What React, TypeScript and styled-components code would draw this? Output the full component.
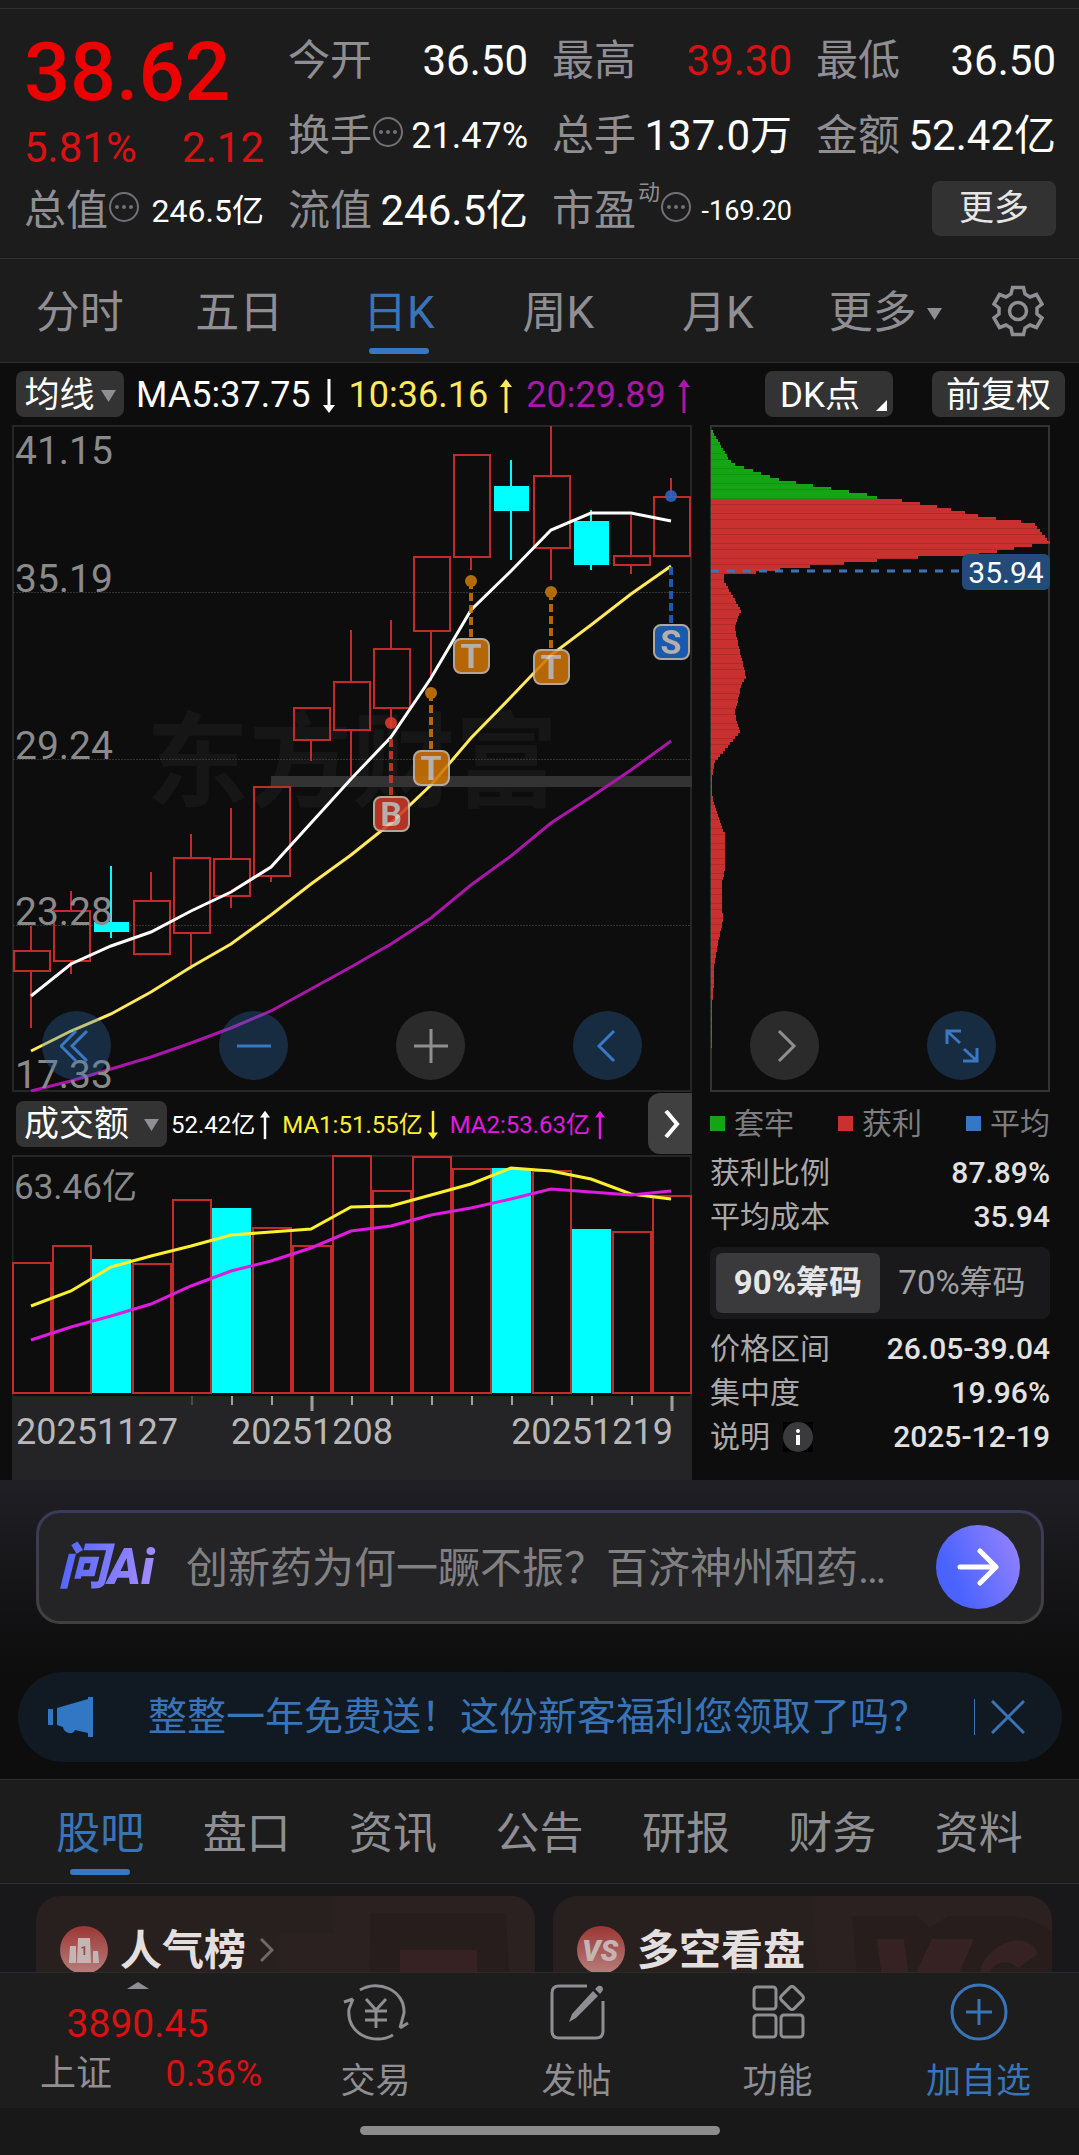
import React from "react";
import styled, { createGlobalStyle, css } from "styled-components";

const c = {
  page: "#0d0d0d",
  bar: "#1c1c1c",
  line: "#2f2f30",
  grey: "#8e8e93",
  axis: "#8a8a8a",
  red: "#d81212",
  price: "#ee0000",
  candle: "#c32a2a",
  cyan: "#00ffff",
  blue: "#3a74b8",
  yellow: "#ffe95e",
  magenta: "#a817a8",
};

const GlobalStyle = createGlobalStyle`
  *, *::before, *::after { box-sizing: border-box; }
  body { margin: 0; background: ${c.page}; line-height: 1.2; }
  body, button { font-family: Roboto, "Noto Sans CJK SC", sans-serif; }
  button { border: 0; padding: 0; margin: 0; background: none; color: inherit; font-size: inherit; line-height: 1.2; cursor: pointer; }
  a { color: inherit; text-decoration: none; }
  svg { display: block; flex: none; }
  svg text { font-family: Roboto, "Noto Sans CJK SC", sans-serif; }
`;

/* ---------- shell ---------- */

const Screen = styled.div`
  display: flex;
  flex-direction: column;
  min-height: 100vh;
  color: #fff;
  background: ${c.page};
`;

const TopStrip = styled.div`
  height: 9px;
  background: ${c.bar};
  border-bottom: 1px solid ${c.line};
`;

/* ---------- quote header ---------- */

const Quote = styled.header`
  display: grid;
  grid-template-columns: repeat(4, minmax(0, 1fr));
  grid-auto-rows: 75px;
  column-gap: 24px;
  padding: 14px 23px 10px 24px;
  background: ${c.bar};
`;

const PriceBlock = styled.div`
  grid-row: 1 / span 2;
`;

const Price = styled.div`
  font-size: 81px;
  line-height: 100px;
  font-weight: 500;
  color: ${c.price};
`;

const Change = styled.div`
  display: flex;
  justify-content: space-between;
  font-size: 42px;
  line-height: 50px;
  color: ${c.red};
`;

const Stat = styled.div`
  display: flex;
  align-items: center;
  justify-content: space-between;
  white-space: nowrap;
`;

const StatName = styled.span`
  display: flex;
  align-items: center;
  font-size: 42px;
  line-height: 60px;
  color: ${c.grey};

  sup {
    align-self: flex-start;
    font-size: 22px;
    line-height: 24px;
    padding-left: 2px;
  }
  svg { margin-bottom: 8px; }
`;

const StatValue = styled.span<{ $size?: number; $up?: boolean }>`
  font-size: ${(p) => p.$size ?? 42}px;
  line-height: 60px;
  color: ${(p) => (p.$up ? c.red : "#fff")};
`;

const MoreButton = styled.button`
  justify-self: end;
  align-self: center;
  width: 124px;
  height: 55px;
  margin-bottom: 4px;
  border-radius: 8px;
  background: #323232;
  color: #e6e6e6;
  font-size: 35px;
`;

const Dots = () => (
  <svg width="32" height="32" viewBox="0 0 32 32" aria-hidden="true">
    <circle cx="16" cy="16" r="14" fill="none" stroke="#727276" strokeWidth="2" />
    <circle cx="9" cy="16" r="2" fill="#727276" />
    <circle cx="16" cy="16" r="2" fill="#727276" />
    <circle cx="23" cy="16" r="2" fill="#727276" />
  </svg>
);

/* ---------- tabs ---------- */

const Tabs = styled.nav<{ $inset?: number }>`
  display: flex;
  height: 105px;
  padding: 0 ${(p) => p.$inset ?? 0}px;
  background: ${c.bar};
  border-top: 1px solid ${c.line};
  border-bottom: 1px solid ${c.line};
`;

const Tab = styled.button<{ $active?: boolean; $menu?: boolean }>`
  position: relative;
  flex: 1 1 140px;
  display: flex;
  align-items: center;
  justify-content: center;
  gap: 10px;
  padding: 6px 0 0 ${(p) => (p.$menu ? 16 : 0)}px;
  font-size: 44px;
  color: ${(p) => (p.$active ? c.blue : c.grey)};
  ${(p) =>
    p.$active &&
    css`
      &::after {
        content: "";
        position: absolute;
        left: calc(50% - 30px);
        bottom: 8px;
        width: 60px;
        height: 6px;
        border-radius: 3px;
        background: #3877c2;
      }
    `}
`;

const GearTab = styled.button`
  display: flex;
  align-items: center;
  justify-content: center;
  width: 122px;
`;

const Triangle = ({ w = 15, h = 12, up = false }) => (
  <svg width={w} height={h} viewBox="0 0 15 12" preserveAspectRatio="none" aria-hidden="true">
    <path d={up ? "M0 12h15L7.500 0z" : "M0 0h15L7.500 12z"} fill={c.grey} />
  </svg>
);

const Gear = () => (
  <svg width="52" height="52" viewBox="0 0 52 52" fill="none" stroke={c.grey} strokeWidth="3.500" aria-hidden="true">
    <path d="M20.500 2.500h11l1.500 6.500 5 3 6.500-2.500 5.500 9.500-5 4v6l5 4-5.500 9.500-6.500-2.500-5 3-1.500 6.500h-11L19 43l-5-3-6.500 2.500L2 33l5-4v-6l-5-4 5.500-9.500L14 12l5-3z" />
    <circle cx="26" cy="26" r="8.500" />
  </svg>
);

/* ---------- chart toolbars ---------- */

const Toolbar = styled.div`
  display: flex;
  align-items: center;
  height: 62px;
  padding: 0 14px 0 16px;
  font-size: 35px;
  white-space: nowrap;
`;

const Chip = styled.button<{ $w: number }>`
  position: relative;
  display: flex;
  align-items: center;
  justify-content: center;
  gap: 6px;
  flex: none;
  width: ${(p) => p.$w}px;
  height: 46px;
  padding-top: 3px;
  border-radius: 8px;
  background: #333334;
  color: #fff;
`;

const Corner = styled.span`
  position: absolute;
  right: 6px;
  bottom: 6px;
  border-left: 11px solid transparent;
  border-bottom: 11px solid #fff;
`;

const DkChip = styled(Chip)`
  justify-content: flex-start;
  padding-left: 15px;
  margin: 0 39px 0 auto;
`;

const Averages = styled.div<{ $small?: boolean }>`
  display: flex;
  align-items: center;
  gap: ${(p) => (p.$small ? 12 : 14)}px;
  margin-left: ${(p) => (p.$small ? 4 : 12)}px;
  padding-top: 3px;
  font-size: ${(p) => (p.$small ? 24 : 36)}px;
`;

const Average = styled.span<{ $color: string; $gap: number }>`
  display: flex;
  align-items: center;
  gap: ${(p) => p.$gap}px;
  color: ${(p) => p.$color};
`;

const Arrow = ({ down = false, w = 12 }) => (
  <svg width={w} height="34" viewBox="0 0 12 34" aria-hidden="true">
    {down ? (
      <>
        <path d="M6 0V28" stroke="currentColor" strokeWidth="3" />
        <path d="M0 26h12L6 34z" fill="currentColor" />
      </>
    ) : (
      <>
        <path d="M6 6V34" stroke="currentColor" strokeWidth="3" />
        <path d="M0 8h12L6 0z" fill="currentColor" />
      </>
    )}
  </svg>
);

/* ---------- chart areas ---------- */

const Columns = styled.div`
  position: relative;
  display: grid;
  grid-template-columns: minmax(0, 2fr) minmax(0, 1fr);
  column-gap: 18px;
  padding: 0 29px 0 12px;
`;

const Plot = styled.svg`
  width: 100%;
  height: auto;
`;

const Controls = styled.div`
  position: absolute;
  left: 42px;
  right: 83px;
  bottom: 12px;
  display: flex;
  justify-content: space-between;
`;

const RoundButton = styled.button<{ $off?: boolean }>`
  display: flex;
  align-items: center;
  justify-content: center;
  width: 69px;
  height: 69px;
  border-radius: 50%;
  color: ${(p) => (p.$off ? "#8f8f93" : "#3a78c4")};
  background: ${(p) => (p.$off ? "rgba(255,255,255,0.125)" : "rgba(48,113,184,0.31)")};
`;

type Candle = [high: number, top: number, bottom: number, low: number, down?: 1];

const candles: Candle[] = [
  [926, 951, 971, 1028],
  [891, 911, 961, 974],
  [866, 922, 932, 938, 1],
  [872, 901, 954, 954],
  [834, 858, 933, 969],
  [808, 859, 896, 908],
  [787, 787, 876, 882],
  [708, 708, 740, 761],
  [630, 682, 730, 776],
  [620, 649, 708, 727],
  [557, 557, 631, 681],
  [455, 455, 557, 570],
  [460, 486, 511, 560, 1],
  [426, 476, 548, 580],
  [510, 521, 565, 570, 1],
  [515, 556, 565, 574],
  [478, 497, 556, 556],
];
const ma5 = [996, 964, 946, 932, 911, 892, 867, 823, 779, 737, 678, 610, 571, 530, 513, 513, 521];
const ma10 = [1051, 1031, 1014, 992, 967, 944, 915, 884, 855, 823, 785, 738, 697, 655, 625, 594, 566];
const ma20 = [1091, 1081, 1069, 1057, 1043, 1028, 1011, 989, 967, 944, 918, 885, 856, 823, 797, 770, 741];

const xOf = (i: number) => 31 + i * 40;
const line = (ys: number[]) => ys.map((y, i) => `${xOf(i)},${y}`).join(" ");

const marks = [
  { x: 471, dot: 581, from: 581, box: 638, t: "T", fill: "#cf7406", dotFill: "#cc7a0c" },
  { x: 431, dot: 693, from: 693, box: 750, t: "T", fill: "#cf7406", dotFill: "#cc7a0c" },
  { x: 551, dot: 592, from: 592, box: 649, t: "T", fill: "#cf7406", dotFill: "#cc7a0c" },
  { x: 671, dot: 496, from: 567, box: 624, t: "S", fill: "#1c66c6", dotFill: "#2f66c6" },
  { x: 391, dot: 723, from: 739, box: 796, t: "B", fill: "#cc3a28", dotFill: "#e23a2a" },
];

const KLine = () => (
  <Plot viewBox="12 425 680 667" role="img" aria-label="日K">
    <text x="146" y="799" fontSize="103" fontWeight="700" fill="#161616">东方财富</text>
    <path d="M13 1091V426H691V1091Z" fill="none" stroke="#262627" strokeWidth="2" />
    {[592, 759, 925].map((y) => (
      <path key={y} d={`M13 ${y + 0.5}H691`} stroke="#343434" strokeWidth="1" strokeDasharray="2 1" />
    ))}
    <rect x="271" y="776" width="421" height="11" fill="#333" />
    {candles.map(([hi, top, bot, lo, down], i) => {
      const x = xOf(i);
      const color = down ? c.cyan : c.candle;
      return (
        <g key={i} stroke={color} strokeWidth="2">
          {hi < top && <path d={`M${x} ${hi}V${top}`} />}
          {lo > bot && <path d={`M${x} ${bot}V${lo}`} />}
          {down ? (
            <rect x={x - 17} y={top} width="35" height={bot - top} fill={c.cyan} stroke="none" />
          ) : (
            <rect x={x - 17} y={top} width="36" height={bot - top} fill="none" />
          )}
        </g>
      );
    })}
    <polyline points={line(ma20)} fill="none" stroke={c.magenta} strokeWidth="3" />
    <polyline points={line(ma10)} fill="none" stroke={c.yellow} strokeWidth="3" />
    <polyline points={line(ma5)} fill="none" stroke="#fff" strokeWidth="3" />
    {marks.map((m) => (
      <g key={m.x} opacity="0.87">
        <circle cx={m.x} cy={m.dot} r="6" fill={m.dotFill} />
        <path d={`M${m.x} ${m.from}V${m.box}`} stroke={m.fill} strokeWidth="4" strokeDasharray="8 4" />
        <rect x={m.x - 17} y={m.box + 1} width="35" height="34" rx="7" fill={m.fill} stroke="#cdbcae" strokeWidth="2" />
        <text x={m.x} y={m.box + 30} textAnchor="middle" fontSize="34" fontWeight="700" fill="#cfc6c2">{m.t}</text>
      </g>
    ))}
    <g fontSize="39" fill={c.axis}>
      <text x="15" y="464">41.15</text>
      <text x="15" y="592">35.19</text>
      <text x="15" y="759">29.24</text>
      <text x="15" y="925">23.28</text>
      <text x="15" y="1088">17.33</text>
    </g>
  </Plot>
);

/* Chip distribution: [price axis y, bar end x] */
const profile: [number, number][] = [
  [427, 711], [458, 729], [463, 735], [478, 779], [484, 813], [493, 867], [498, 884], [499, 902],
  [505, 937], [515, 983], [519, 1008], [521, 1033], [541, 1050], [544, 1032], [553, 979], [555, 933],
  [558, 888], [566, 799], [569, 770], [573, 742], [574, 724], [580, 724], [609, 741], [624, 735],
  [633, 736], [676, 746], [683, 741], [705, 737], [710, 734], [730, 740], [760, 715], [776, 712],
  [794, 712], [812, 717], [833, 725], [868, 725], [881, 722], [905, 722], [919, 723], [941, 718],
  [966, 714], [981, 714], [1004, 712], [1090, 711],
];

const endAt = (y: number) => {
  for (let i = 1; i < profile.length; i++) {
    const [y1, x1] = profile[i];
    const [y0, x0] = profile[i - 1];
    if (y <= y1) return x0 + ((x1 - x0) * (y - y0)) / (y1 - y0);
  }
  return 711;
};

const levels = Array.from({ length: 221 }, (_, i) => 427 + i * 3);

const ChipPlot = () => (
  <Plot viewBox="710 425 340 667" role="img" aria-label="筹码">
    <path d="M711 1091V426H1049V1091Z" fill="none" stroke="#333334" strokeWidth="2" />
    {levels.map((y, i) => {
      const end = Math.round(endAt(y));
      const green = y < 498;
      return (
        <g key={y}>
          <rect x="711" y={y} width={Math.max(end - 711, 0)} height="3" fill={green ? "#14a514" : "#c93030"} />
          {(i * 7) % 5 < 2 && (
            <rect x="711" y={y + 2} width={Math.max(end - 711, 0)} height="1" fill={green ? "#129412" : "#b02a2a"} />
          )}
        </g>
      );
    })}
    <path d="M711 571H960" stroke="#3a74b8" strokeWidth="3" strokeDasharray="8 8" />
    <rect x="962" y="554" width="88" height="36" rx="6" fill="#234b79" />
    <text x="1006" y="583" textAnchor="middle" fontSize="30" fill="#fff">35.94</text>
  </Plot>
);

/* ---------- turnover ---------- */

const VolumeBar = styled.div`
  display: flex;
  align-items: center;
  height: 63px;
  padding-left: 4px;
  font-size: 35px;
  white-space: nowrap;
`;

const NameChip = styled(Chip)`
  gap: 15px;
`;

const NextButton = styled.button`
  display: flex;
  align-items: center;
  justify-content: center;
  align-self: stretch;
  flex: none;
  width: 44px;
  margin: 1px 0 1px auto;
  padding-left: 4px;
  border-radius: 12px 0 0 12px;
  background: #404041;
`;

const volumes: [number, 1?][] = [
  [1263], [1246], [1259, 1], [1264], [1200], [1208, 1], [1228], [1246], [1156],
  [1191], [1157], [1169], [1168, 1], [1171], [1229, 1], [1232], [1196],
];
const vol5 = [1306, 1291, 1267, 1256, 1246, 1235, 1232, 1229, 1207, 1206, 1195, 1184, 1168, 1171, 1179, 1194, 1199];
const vol10 = [1340, 1327, 1316, 1304, 1286, 1271, 1261, 1248, 1231, 1226, 1215, 1208, 1199, 1189, 1192, 1195, 1191];

const VolumePlot = () => (
  <Plot viewBox="12 1155 680 325" role="img" aria-label="成交额">
    <path d="M12 1156H692M691 1155V1396M12.500 1155V1396" stroke="#262627" strokeWidth="2" />
    {volumes.map(([top, down], i) =>
      down ? (
        <rect key={i} x={12 + i * 40} y={top} width="39" height={1393 - top} fill={c.cyan} />
      ) : (
        <rect key={i} x={13 + i * 40} y={top} width="38" height={1393 - top} fill="none" stroke={c.candle} strokeWidth="2" />
      )
    )}
    <polyline points={line(vol5)} fill="none" stroke="#fff02e" strokeWidth="3" />
    <polyline points={line(vol10)} fill="none" stroke="#e01be0" strokeWidth="3" />
    <text x="14" y="1199" fontSize="35" fill={c.axis}>63.46亿</text>
    <rect x="12" y="1396" width="680" height="84" fill="#242426" />
    {Array.from({ length: 13 }, (_, i) => {
      const big = i === 3 || i === 12;
      return (
        <path key={i} d={`M${192 + i * 40} 1396V${big ? 1411 : 1405}`} stroke={i === 0 ? "#4a4a4c" : "#a0a0a2"} strokeWidth={big ? 3 : 2} />
      );
    })}
    <g fontSize="36" fill="#b8b8ba">
      <text x="16" y="1444">20251127</text>
      <text x="312" y="1444" textAnchor="middle">20251208</text>
      <text x="673" y="1444" textAnchor="end">20251219</text>
    </g>
  </Plot>
);

/* ---------- chip statistics ---------- */

const ChipStats = styled.section`
  font-size: 30px;
  color: #a9a9ab;
`;

const Legend = styled.div`
  display: flex;
  align-items: center;
  justify-content: space-between;
  height: 59px;
  padding-top: 4px;
  color: #7d7d80;
`;

const LegendItem = styled.span<{ $color: string }>`
  display: flex;
  align-items: center;
  gap: 9px;
  &::before {
    content: "";
    width: 15px;
    height: 15px;
    background: ${(p) => p.$color};
  }
`;

const Row = styled.div`
  display: flex;
  align-items: center;
  justify-content: space-between;
  height: 44px;
  white-space: nowrap;
  b { font-weight: 500; color: #e2e2e2; }
`;

const RowName = styled.span`
  display: flex;
  align-items: center;
  gap: 13px;
`;

const Segments = styled.div`
  display: flex;
  height: 72px;
  margin: 8px 0;
  padding: 6px;
  border-radius: 8px;
  background: #19191b;
`;

const Segment = styled.button<{ $on?: boolean }>`
  flex: 1 1 0;
  border-radius: 6px;
  font-size: 33px;
  white-space: nowrap;
  font-weight: ${(p) => (p.$on ? 700 : 400)};
  color: ${(p) => (p.$on ? "#e6e6e6" : "#a0a0a2")};
  background: ${(p) => (p.$on ? "#3a3a3c" : "transparent")};
`;

const InfoButton = styled.button`
  display: flex;
  background: #000;
`;

/* ---------- promos ---------- */

const Promos = styled.section`
  display: flex;
  flex-direction: column;
  gap: 48px;
  padding: 30px 17px 17px 18px;
  background: linear-gradient(#1f1f25, #111112 50%, #0d0d0d 65%);
`;

const AskBox = styled.div`
  display: flex;
  align-items: center;
  height: 114px;
  margin: 0 18px;
  padding: 0 21px 0 19px;
  border: 3px solid transparent;
  border-radius: 24px;
  background:
    linear-gradient(#242426, #242426) padding-box,
    linear-gradient(#3a3a5c, #443f3e) border-box;
`;

const AskLogo = styled.span`
  flex: none;
  width: 128px;
  font-size: 50px;
  line-height: 60px;
  font-style: italic;
  font-weight: 900;
  color: transparent;
  background: linear-gradient(100deg, #4c63ff, #a58cff 75%);
  background-clip: text;
  -webkit-background-clip: text;
`;

const AskText = styled.a`
  flex: 1;
  min-width: 0;
  max-width: 704px;
  overflow: hidden;
  padding-top: 4px;
  font-size: 42px;
  line-height: 60px;
  white-space: nowrap;
  color: #808082;
`;

const AskGo = styled.button`
  display: flex;
  align-items: center;
  justify-content: center;
  flex: none;
  width: 84px;
  height: 84px;
  margin-left: auto;
  border-radius: 50%;
  background: linear-gradient(65deg, #4a63ff 25%, #9a85ff);
`;

const Banner = styled.div`
  display: flex;
  align-items: center;
  height: 90px;
  padding: 0 37px 0 30px;
  border-radius: 45px;
  background: #111a22;
  color: ${c.blue};
`;

const BannerText = styled.a`
  flex: 1;
  min-width: 0;
  margin-left: 54px;
  overflow: hidden;
  font-size: 39px;
  line-height: 60px;
  white-space: nowrap;
`;

const BannerClose = styled.button`
  display: flex;
  align-items: center;
  height: 36px;
  padding-left: 16px;
  border-left: 1px solid ${c.blue};
`;

/* ---------- feed ---------- */

const Feed = styled.section`
  flex: 1 0 88px;
  height: 88px;
  overflow: hidden;
  display: grid;
  grid-template-columns: minmax(0, 1fr) minmax(0, 1fr);
  gap: 18px;
  padding: 12px 27px 0 36px;
  background: #18181a;
`;

const Card = styled.article`
  position: relative;
  height: 160px;
  border-radius: 24px;
  overflow: hidden;
  background: #281f1f;
`;

const CardArt = styled.svg`
  position: absolute;
  top: 0;
  right: 0;
`;

const CardHead = styled.a`
  position: relative;
  display: flex;
  align-items: center;
  gap: 12px;
  height: 48px;
  margin: 30px 24px;
  font-size: 42px;
  font-weight: 700;
  color: #e4dfdf;
  span { padding-top: 2px; }
  span + svg { margin-left: 2px; }
`;

/* ---------- bottom bar ---------- */

const BottomBar = styled.nav`
  display: flex;
  height: 136px;
  background: #1d1d1d;
  border-top: 1px solid #2a2a2b;
`;

const IndexCell = styled.a`
  flex: none;
  display: flex;
  flex-direction: column;
  align-items: center;
  width: 275px;
  padding-top: 9px;
  color: ${c.red};
`;

const IndexValue = styled.span`
  font-size: 39px;
  line-height: 50px;
  margin-top: 10px;
`;

const IndexRow = styled.span`
  display: flex;
  justify-content: space-between;
  align-self: stretch;
  padding: 0 13px 0 40px;
  font-size: 36px;
  line-height: 50px;
`;

const Muted = styled.span`
  color: ${c.grey};
`;

const NavItem = styled.a<{ $accent?: boolean }>`
  flex: 1 1 0;
  display: flex;
  flex-direction: column;
  align-items: center;
  gap: 15px;
  padding-top: 9px;
  font-size: 35px;
  line-height: 50px;
  color: ${(p) => (p.$accent ? c.blue : c.grey)};
`;

const HomeArea = styled.div`
  display: flex;
  justify-content: center;
  height: 47px;
  padding-top: 18px;
  background: #181818;
`;

const HomeBar = styled.div`
  width: 360px;
  height: 9px;
  border-radius: 5px;
  background: #8c8c8c;
`;

const stroke = { fill: "none", stroke: "currentColor", strokeWidth: 3 } as const;

export default function App() {
  return (
    <Screen>
      <GlobalStyle />
      <TopStrip />
      <Quote>
        <PriceBlock>
          <Price>38.62</Price>
          <Change><span>5.81%</span><span>2.12</span></Change>
        </PriceBlock>
        <Stat><StatName>今开</StatName><StatValue>36.50</StatValue></Stat>
        <Stat><StatName>最高</StatName><StatValue $up>39.30</StatValue></Stat>
        <Stat><StatName>最低</StatName><StatValue>36.50</StatValue></Stat>
        <Stat><StatName>换手<Dots /></StatName><StatValue $size={36}>21.47%</StatValue></Stat>
        <Stat><StatName>总手</StatName><StatValue>137.0万</StatValue></Stat>
        <Stat><StatName>金额</StatName><StatValue>52.42亿</StatValue></Stat>
        <Stat><StatName>总值<Dots /></StatName><StatValue $size={32}>246.5亿</StatValue></Stat>
        <Stat><StatName>流值</StatName><StatValue>246.5亿</StatValue></Stat>
        <Stat><StatName>市盈<sup>动</sup><Dots /></StatName><StatValue $size={27}>-169.20</StatValue></Stat>
        <MoreButton>更多</MoreButton>
      </Quote>

      <Tabs>
        <Tab>分时</Tab>
        <Tab>五日</Tab>
        <Tab $active>日K</Tab>
        <Tab>周K</Tab>
        <Tab>月K</Tab>
        <Tab $menu>更多<Triangle /></Tab>
        <GearTab aria-label="设置"><Gear /></GearTab>
      </Tabs>

      <Toolbar>
        <Chip $w={108}>均线<Triangle /></Chip>
        <Averages>
          <Average $color="#fff" $gap={12}>MA5:37.75<Arrow down /></Average>
          <Average $color={c.yellow} $gap={12}>10:36.16<Arrow /></Average>
          <Average $color={c.magenta} $gap={12}>20:29.89<Arrow /></Average>
        </Averages>
        <DkChip $w={128}>DK点<Corner /></DkChip>
        <Chip $w={133}>前复权</Chip>
      </Toolbar>

      <Columns>
        <KLine />
        <ChipPlot />
        <Controls>
          <RoundButton aria-label="最早">
            <svg width="34" height="34" viewBox="0 0 34 34" {...stroke}><path d="M16 2 1 17 16 32M27 2 12 17 27 32" /></svg>
          </RoundButton>
          <RoundButton aria-label="缩小">
            <svg width="34" height="34" viewBox="0 0 34 34" {...stroke}><path d="M0 17H34" /></svg>
          </RoundButton>
          <RoundButton $off aria-label="放大">
            <svg width="34" height="34" viewBox="0 0 34 34" {...stroke}><path d="M0 17H34M17 0V34" /></svg>
          </RoundButton>
          <RoundButton aria-label="左移">
            <svg width="34" height="34" viewBox="0 0 34 34" {...stroke}><path d="M23 2 8 17 23 32" /></svg>
          </RoundButton>
          <RoundButton $off aria-label="右移">
            <svg width="34" height="34" viewBox="0 0 34 34" {...stroke}><path d="M11 2 26 17 11 32" /></svg>
          </RoundButton>
          <RoundButton aria-label="全屏">
            <svg width="34" height="34" viewBox="0 0 34 34" {...stroke}>
              <path d="M2 15V2H16M2 2 15 14M32 19V32H18M32 32 19 20" />
            </svg>
          </RoundButton>
        </Controls>
      </Columns>

      <Columns>
        <div>
          <VolumeBar>
            <NameChip $w={151}>成交额<Triangle /></NameChip>
            <Averages $small>
              <Average $color="#fff" $gap={5}>52.42亿<Arrow w={10} /></Average>
              <Average $color="#fff02e" $gap={5}>MA1:51.55亿<Arrow down w={10} /></Average>
              <Average $color="#e01be0" $gap={5}>MA2:53.63亿<Arrow w={10} /></Average>
            </Averages>
            <NextButton aria-label="下一项">
              <svg width="16" height="28" viewBox="0 0 16 28" fill="none" stroke="#fff" strokeWidth="4"><path d="M2 1 13 14 2 27" /></svg>
            </NextButton>
          </VolumeBar>
          <VolumePlot />
        </div>
        <ChipStats>
          <Legend>
            <LegendItem $color="#14a514">套牢</LegendItem>
            <LegendItem $color="#c93030">获利</LegendItem>
            <LegendItem $color="#3477c6">平均</LegendItem>
          </Legend>
          <Row><span>获利比例</span><b>87.89%</b></Row>
          <Row><span>平均成本</span><b>35.94</b></Row>
          <Segments>
            <Segment $on>90%筹码</Segment>
            <Segment>70%筹码</Segment>
          </Segments>
          <Row><span>价格区间</span><b>26.05-39.04</b></Row>
          <Row><span>集中度</span><b>19.96%</b></Row>
          <Row>
            <RowName>
              说明
              <InfoButton aria-label="说明">
                <svg width="30" height="30" viewBox="0 0 30 30">
                  <circle cx="15" cy="15" r="15" fill="#3a3a3c" />
                  <circle cx="15" cy="9" r="2" fill="#fff" />
                  <path d="M15 13V23" stroke="#fff" strokeWidth="4" />
                </svg>
              </InfoButton>
            </RowName>
            <b>2025-12-19</b>
          </Row>
        </ChipStats>
      </Columns>

      <Promos>
        <AskBox>
          <AskLogo>问Ai</AskLogo>
          <AskText href="#ask">创新药为何一蹶不振？百济神州和药…</AskText>
          <AskGo aria-label="提问">
            <svg width="42" height="38" viewBox="0 0 42 38" fill="none" stroke="#fff" strokeWidth="5" strokeLinecap="round" strokeLinejoin="round">
              <path d="M3 19H38M23 3 39 19 23 35" />
            </svg>
          </AskGo>
        </AskBox>
        <Banner>
          <svg width="46" height="40" viewBox="0 0 46 40" fill="#3277c4" aria-hidden="true">
            <path d="M0 12H5V28H0zM9 11 40 2V0H45V40H40V36L27 33C26 38 16 37 15 30L9 28z" />
          </svg>
          <BannerText href="#gift">整整一年免费送！这份新客福利您领取了吗？</BannerText>
          <BannerClose aria-label="关闭">
            <svg width="34" height="34" viewBox="0 0 34 34" {...stroke}><path d="M1 1 33 33M33 1 1 33" /></svg>
          </BannerClose>
        </Banner>
      </Promos>

      <Tabs $inset={27}>
        <Tab $active>股吧</Tab>
        <Tab>盘口</Tab>
        <Tab>资讯</Tab>
        <Tab>公告</Tab>
        <Tab>研报</Tab>
        <Tab>财务</Tab>
        <Tab>资料</Tab>
      </Tabs>

      <Feed>
        <Card>
          <CardArt width="256" height="160" viewBox="0 0 256 160">
            <path d="M0 160V38H54V0H256V160z" fill="#2b2121" />
            <path d="M88 160 92 17H227L234 160z" fill="#271d1d" />
            <path d="M121 54H198V160H121z" fill="#362222" />
          </CardArt>
          <CardHead href="#rank">
            <svg width="48" height="48" viewBox="0 0 48 48">
              <defs>
                <linearGradient id="badge" x1="0" y1="0" x2="0" y2="1">
                  <stop offset="0" stopColor="#9c3735" />
                  <stop offset="1" stopColor="#b67f7c" />
                </linearGradient>
              </defs>
              <circle cx="24" cy="24" r="24" fill="url(#badge)" />
              <path d="M9 37 10 20H16V37zM17 37 18 12H30L31 37zM33 37V25H38L39 37z" fill="#c4b4b3" />
              <text x="24" y="29" textAnchor="middle" fontSize="12" fontWeight="700" fill="#a04a48">1</text>
            </svg>
            <span>人气榜</span>
            <svg width="14" height="24" viewBox="0 0 14 24" fill="none" stroke="#6f6969" strokeWidth="3"><path d="M1 1 12 12 1 23" /></svg>
          </CardHead>
        </Card>
        <Card>
          <CardArt width="240" height="160" viewBox="0 0 240 160">
            <path d="M0 0H240V160H10z" fill="#2b2121" />
            <path d="M40 20H105L118 32 136 20H190C215 20 230 28 240 36V160H52z" fill="#281d1d" />
            <path d="M65 43H92L98 90 120 43H162L110 160H80z" fill="#362222" />
            <path d="M168 78C170 50 215 30 226 58L206 72C196 62 180 66 178 78z" fill="#362222" />
          </CardArt>
          <CardHead href="#vs">
            <svg width="48" height="48" viewBox="0 0 48 48">
              <circle cx="24" cy="24" r="24" fill="url(#badge)" />
              <text x="23" y="35" textAnchor="middle" fontSize="29" fontWeight="900" fontStyle="italic" fill="#c4b4b3">VS</text>
            </svg>
            <span>多空看盘</span>
          </CardHead>
        </Card>
      </Feed>

      <BottomBar>
        <IndexCell href="#index">
          <Triangle w={22} h={7} up />
          <IndexValue>3890.45</IndexValue>
          <IndexRow><Muted>上证</Muted><span>0.36%</span></IndexRow>
        </IndexCell>
        <NavItem href="#trade">
          <svg width="66" height="60" viewBox="0 0 66 60" {...stroke}>
            <path d="M17 8C35-3 62 8 61 31L57 46M57 46 65 41M50 53C31 64 3 52 6 27L10 17M10 17 1 20" />
            <path d="M23 17 33 28 43 17M33 28V46M22 29H44M22 38H44" />
          </svg>
          交易
        </NavItem>
        <NavItem href="#post">
          <svg width="56" height="60" viewBox="0 0 56 60" {...stroke}>
            <path d="M38 4H10Q3 4 3 11V49Q3 56 10 56H47Q54 56 54 49V19" />
            <path d="M20 40 23 32 44 9 49 14 27 36zM46 7 49 4Q54 3 54 8L51 12z" fill="currentColor" stroke="none" />
          </svg>
          发帖
        </NavItem>
        <NavItem href="#tools">
          <svg width="56" height="60" viewBox="0 0 56 60" {...stroke}>
            <rect x="4" y="5" width="22" height="22" rx="3" />
            <rect x="4" y="33" width="22" height="22" rx="3" />
            <rect x="31" y="33" width="22" height="22" rx="3" />
            <rect x="33" y="7" width="18" height="18" rx="3" transform="rotate(45 42 16)" />
          </svg>
          功能
        </NavItem>
        <NavItem href="#add" $accent>
          <svg width="58" height="60" viewBox="0 0 58 60" {...stroke}>
            <circle cx="29" cy="30" r="27" />
            <path d="M16 30H42M29 17V43" />
          </svg>
          加自选
        </NavItem>
      </BottomBar>
      <HomeArea><HomeBar /></HomeArea>
    </Screen>
  );
}
